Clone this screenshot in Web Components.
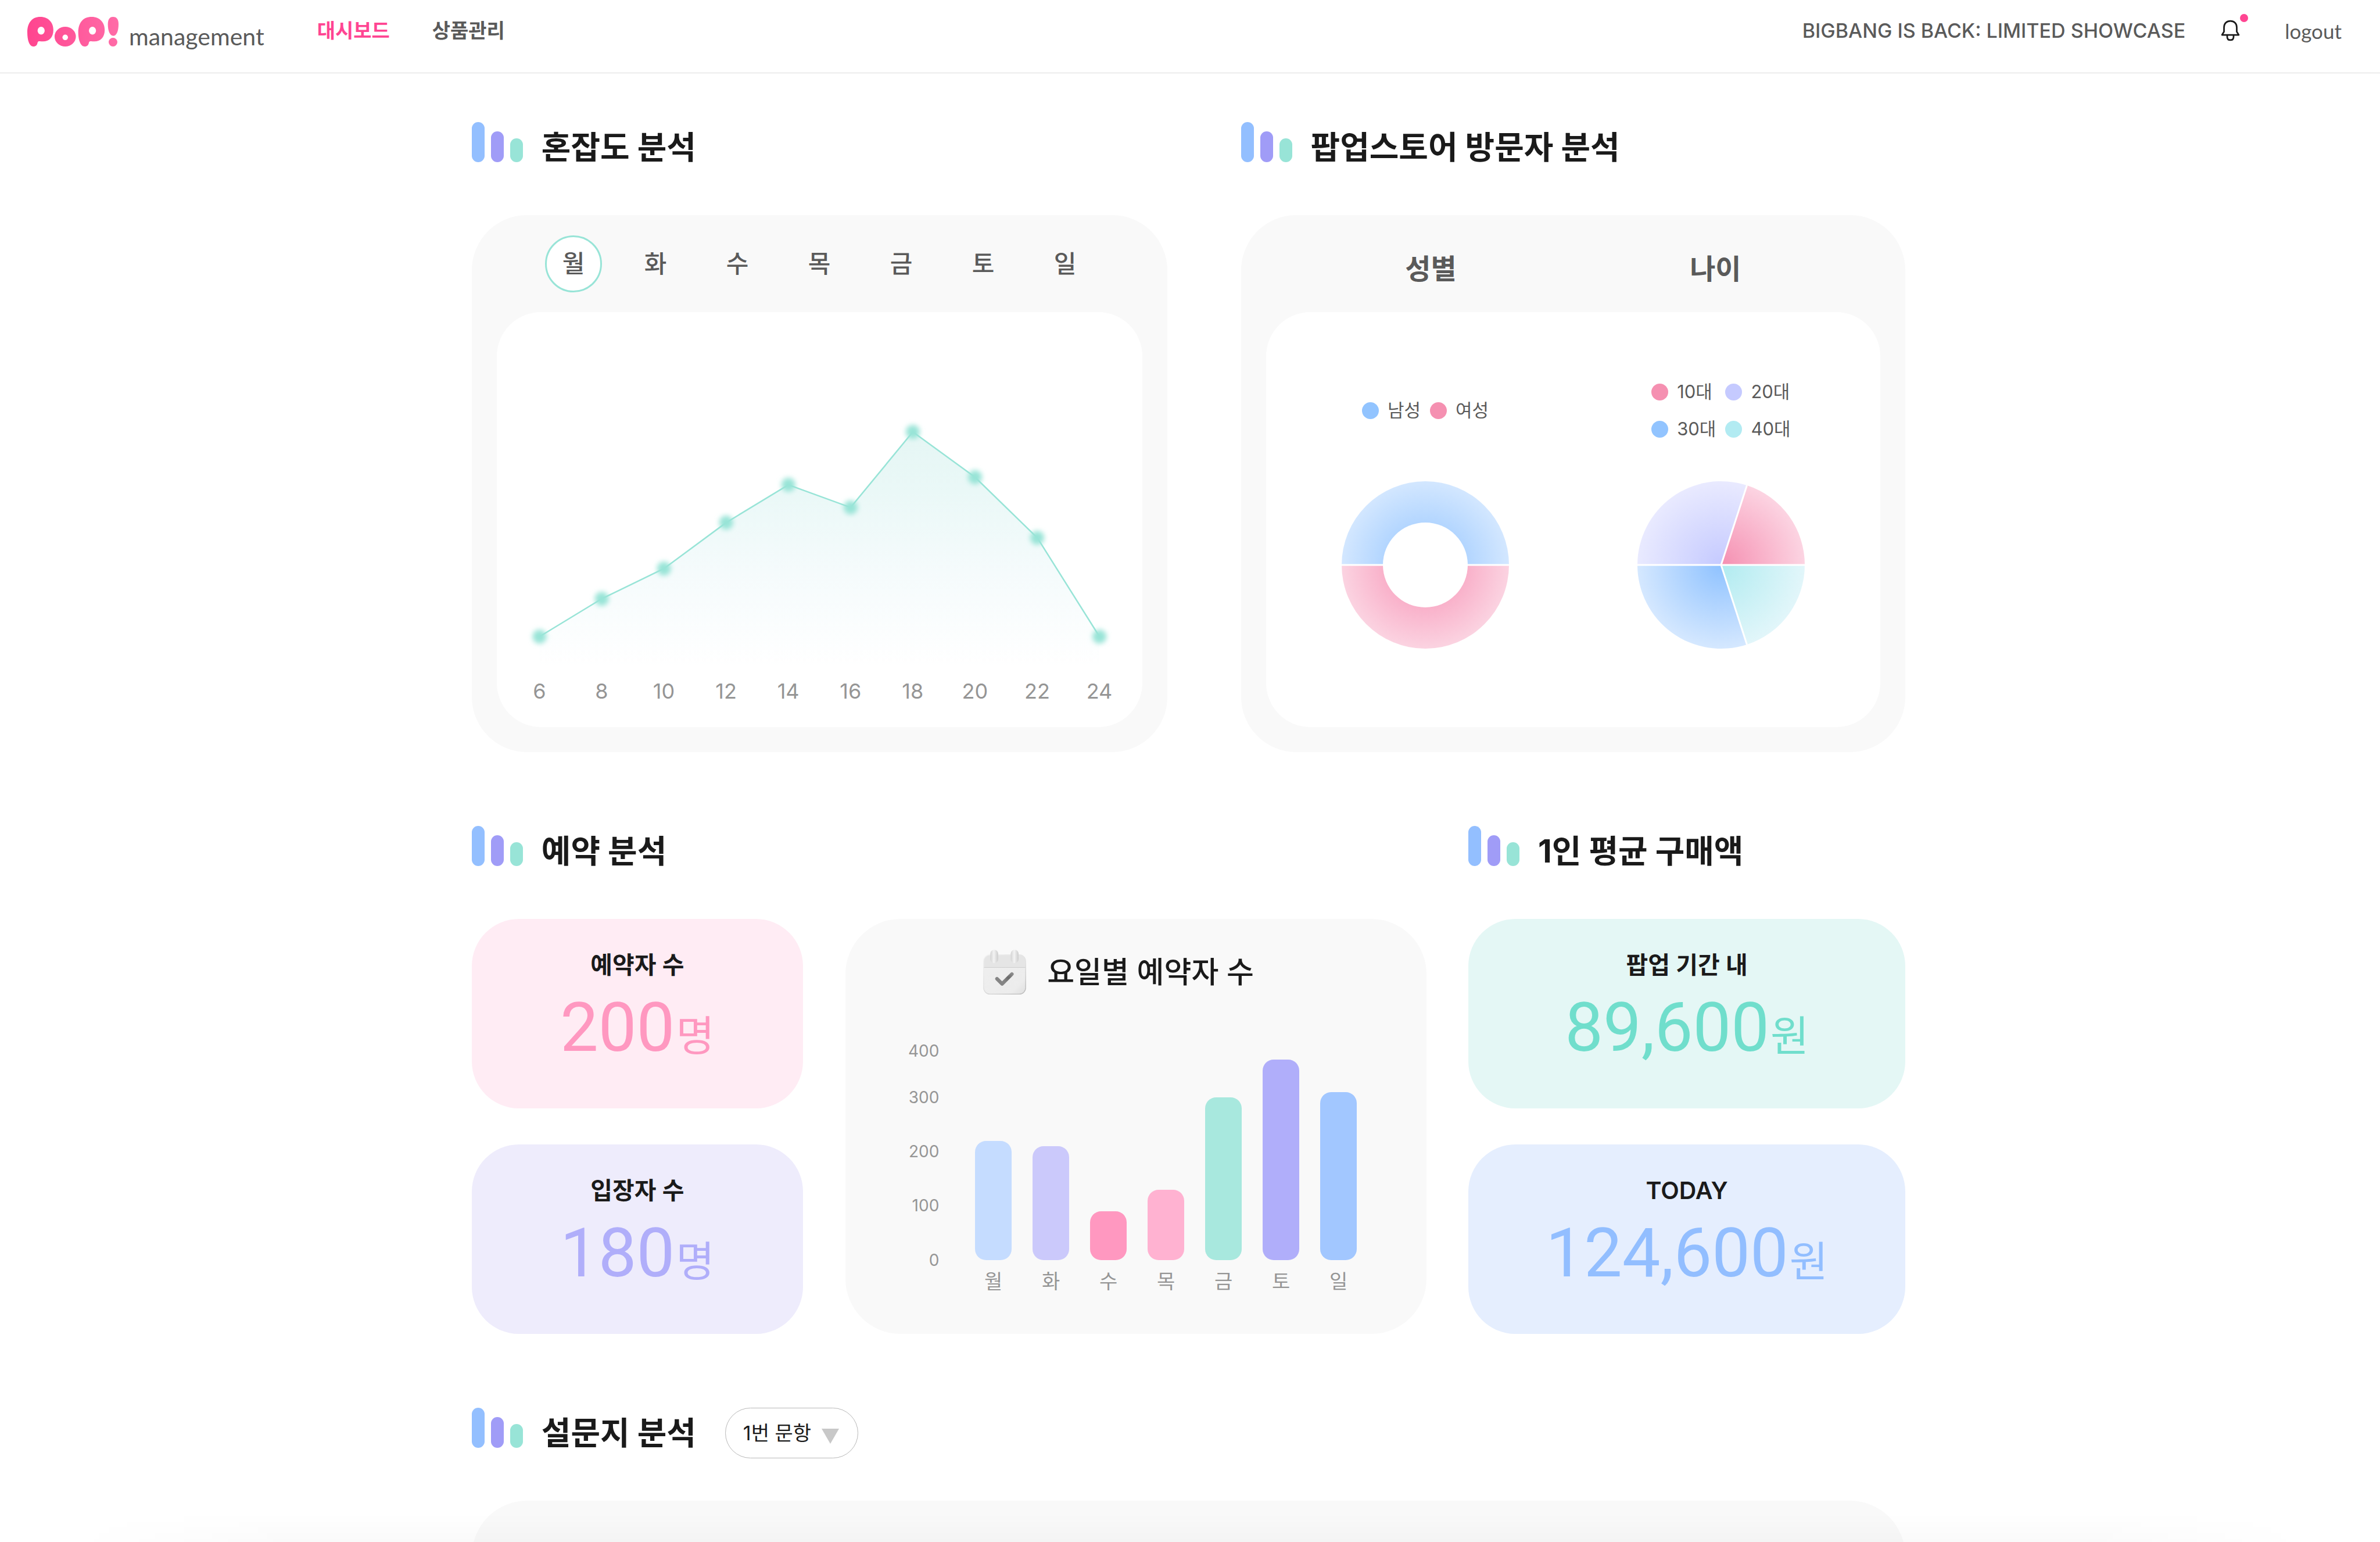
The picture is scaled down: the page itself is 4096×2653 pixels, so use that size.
<!DOCTYPE html>
<html lang="ko">
<head>
<meta charset="utf-8">
<title>PoP! management</title>
<style>
  body {
    margin: 0;
    background: #fff;
    color: #1a1a1a;
    font-family: Inter, "Noto Sans CJK KR", sans-serif;
  }
</style>
</head>
<body>
<pop-dashboard></pop-dashboard>
<script>
const base = `
  *, *::before, *::after { box-sizing: border-box; }
  button, select { font: inherit; color: inherit; background: none; border: 0; margin: 0; padding: 0; cursor: pointer; }
  a { color: inherit; text-decoration: none; }
  h1, h2, h3, p, ul, ol { margin: 0; padding: 0; font: inherit; list-style: none; }
  svg { display: block; }
`;
function component(name, css, render) {
  customElements.define(name, class extends HTMLElement {
    connectedCallback() {
      if (this.shadowRoot) return;
      const t = document.createElement('template');
      t.innerHTML = `<style>${base}${css}</style>${typeof render === 'function' ? render(this) : render}`;
      this.attachShadow({ mode: 'open' }).append(t.content.cloneNode(true));
    }
  });
}

component('pop-logo', `
  :host { display: flex; align-items: flex-start; gap: 18px; }
  svg { width: 157px; height: 51px; margin-top: 10px; }
  span { font: 41px/48px Lato, sans-serif; color: #5a5a5a; padding-top: 20px; }
`, `
  <svg viewBox="70 43 231 75" role="img" aria-label="PoP!">
    <defs><linearGradient id="g" gradientUnits="userSpaceOnUse" x1="70" y1="0" x2="301" y2="0">
      <stop offset="0" stop-color="#ff458f"/><stop offset="1" stop-color="#ff6ba7"/></linearGradient></defs>
    <g fill="url(#g)">
      <path d="M70 82C70 58 82 43 103 43C124 43 136 58 136 76C136 95 125 105 110 105C101 105 97 103 96 108C95 114 92 118 85 118C75 118 70 102 70 82Z"/>
      <ellipse cx="166" cy="93" rx="27" ry="25"/>
      <path d="M199 82C199 58 211 43 233 43C254 43 266 58 266 76C266 95 255 105 240 105C231 105 227 103 226 108C225 114 222 118 215 118C205 118 199 102 199 82Z"/>
      <path d="M287 43C297 43 301 50 301 62C301 78 296 91 288 91C279 91 274 78 274 62C274 50 278 43 287 43Z"/>
      <circle cx="287" cy="107" r="11"/>
    </g>
    <g fill="#fff"><ellipse cx="105" cy="78" rx="9" ry="10"/><ellipse cx="166" cy="95" rx="7" ry="7"/><ellipse cx="235" cy="78" rx="9" ry="10"/></g>
  </svg>
  <span>management</span>
`);

component('pop-header', `
  :host { display: flex; align-items: center; height: 126px; padding: 0 66px 20px 47px; border-bottom: 1px solid #ddd; color: #5a5a5a; }
  nav { display: flex; gap: 73px; margin-left: 91px; font-size: 34px; line-height: 48px; font-weight: 700; }
  [aria-current] { color: #ff4592; }
  .right { display: flex; align-items: center; margin-left: auto; }
  .store { font-size: 34px; line-height: 48px; font-weight: 500; }
  .bell { position: relative; margin: 0 77px 0 61px; color: #1a1a1a; }
  .bell svg { width: 33px; height: 37px; }
  .bell i { position: absolute; top: -10px; right: -14px; width: 14px; height: 14px; border-radius: 50%; background: #ff4592; }
  .logout { font: 35px/48px Lato, sans-serif; }
`, `
  <pop-logo></pop-logo>
  <nav><a href="#dashboard" aria-current="page">대시보드</a><a href="#products">상품관리</a></nav>
  <div class="right">
    <p class="store">BIGBANG IS BACK: LIMITED SHOWCASE</p>
    <button class="bell" aria-label="알림">
      <svg viewBox="0 0 48 54" fill="none" stroke="currentColor" stroke-width="4" stroke-linecap="round" stroke-linejoin="round">
        <path d="M8 30V19C8 9 15 3 24 3S40 9 40 19V30L45 38H3Z"/><path d="M16 39V43C16 48 19 51 24 51S32 48 32 43V39"/>
      </svg><i></i>
    </button>
    <button class="logout">logout</button>
  </div>
`);

component('section-title', `
  :host { display: flex; align-items: flex-start; height: 87px; margin-bottom: 73px; }
  .bars { display: flex; align-items: flex-end; gap: 11px; height: 69px; margin-right: 32px; }
  i { width: 22px; border-radius: 11px; }
  i:nth-child(1) { height: 69px; background: #93bfff; }
  i:nth-child(2) { height: 53px; background: #a09cf7; }
  i:nth-child(3) { height: 41px; background: #98e4d7; }
  h2 { font-size: 55px; line-height: 86px; font-weight: 700; white-space: nowrap; }
  ::slotted(question-select) { margin-left: 50px; }
`, `<div class="bars"><i></i><i></i><i></i></div><h2><slot></slot></h2><slot name="action"></slot>`);

component('question-select', `
  :host { display: block; position: relative; color: #1a1a1a; }
  select { appearance: none; width: 229px; height: 87px; padding: 0 0 0 30px; border: 1px solid #b8b8b8; border-radius: 44px; font-size: 34px; }
  svg { position: absolute; right: 33px; top: 36px; width: 30px; height: 26px; pointer-events: none; }
`, `
  <select aria-label="문항 선택"><option>1번 문항</option><option>2번 문항</option><option>3번 문항</option></select>
  <svg viewBox="0 0 30 26"><path d="M0 0H30L15 26Z" fill="#c8c8c8"/></svg>
`);

component('day-tabs', `
  :host { display: flex; justify-content: center; gap: 43px; color: #5a5a5a; }
  button { width: 98px; height: 98px; border-radius: 50%; border: 3px solid transparent; font-size: 42px; line-height: 48px; font-weight: 500; }
  [aria-pressed=true] { background: #fff; border-color: #98e4d7; }
`, [...'월화수목금토일'].map((d, i) => `<button aria-pressed="${i === 0}">${d}</button>`).join(''));

component('crowd-chart', `
  :host { display: block; padding: 180px 20px 0; }
  svg { width: 100%; height: auto; }
  ol { display: flex; color: #959595; font-size: 36px; line-height: 44px; }
  li { flex: 1; text-align: center; }
`, () => {
  const ys = [378, 313, 261, 182, 117, 156, 26, 104, 208, 378];
  const pts = ys.map((y, i) => [53.5 + 107 * i, y]);
  const line = pts.map(p => p.join(',')).join(' ');
  return `
  <svg viewBox="0 0 1070 450">
    <defs>
      <linearGradient id="a" gradientUnits="userSpaceOnUse" x1="0" y1="26" x2="0" y2="430"><stop stop-color="#e5f6f4"/><stop offset=".25" stop-color="#eaf8f7"/><stop offset=".6" stop-color="#f5fbfc"/><stop offset="1" stop-color="#fff"/></linearGradient>
      <filter id="b" x="-100%" y="-100%" width="300%" height="300%"><feGaussianBlur stdDeviation="4"/></filter>
    </defs>
    <polygon fill="url(#a)" points="53.5,440 ${line} 1016.5,440"/>
    <polyline fill="none" stroke="#98e4d7" stroke-width="2.5" points="${line}"/>
    ${pts.map(([x, y]) => `<circle cx="${x}" cy="${y}" r="12" fill="#98e4d7" filter="url(#b)"/>`).join('')}
  </svg>
  <ol>${ys.map((_, i) => `<li>${6 + i * 2}</li>`).join('')}</ol>`;
});

component('chart-legend', `
  :host { display: grid; grid-template-columns: auto auto; align-content: center; justify-content: center; gap: 20px 16px; height: 108px; color: #5a5a5a; }
  span { display: flex; align-items: center; gap: 15px; font-size: 31px; line-height: 44px; }
  i { width: 29px; height: 29px; border-radius: 50%; }
`, el => el.getAttribute('items').split(',').map(s => s.split(':'))
  .map(([t, c]) => `<span><i style="background:${c}"></i>${t}</span>`).join(''));

component('pie-chart', `
  :host { display: block; }
  svg { width: 288px; height: 288px; }
`, el => {
  const hole = +el.getAttribute('hole') || 0, R = 144;
  const pt = a => [R * Math.cos(a * Math.PI / 180), -R * Math.sin(a * Math.PI / 180)].map(n => n.toFixed(2)).join(' ');
  const slices = el.getAttribute('slices').split(',').map(s => s.split(':'));
  return `<svg viewBox="-144 -144 288 288">
    <defs>${slices.map(([, , c, d], i) => `<radialGradient id="s${i}" gradientUnits="userSpaceOnUse" cx="0" cy="0" r="144"><stop stop-color="${c}"/><stop offset="1" stop-color="${d}"/></radialGradient>`).join('')}</defs>
    ${slices.map(([a, b], i) => `<path fill="url(#s${i})" d="M0 0L${pt(+a)}A${R} ${R} 0 0 0 ${pt(+b)}Z"/>`).join('')}
    <path d="${slices.map(([a]) => `M0 0L${pt(+a)}`).join('')}" stroke="#fff" stroke-width="3"/>
    ${hole ? `<circle r="${hole}" fill="#fff"/>` : ''}
  </svg>`;
});

component('chart-panel', `
  :host { display: flex; flex-direction: column; height: 924px; padding: 0 43px 43px; border-radius: 95px; background: #f9f9f9; }
  header { height: 167px; padding-top: 35px; flex: none; }
  .body { flex: 1; border-radius: 76px; background: #fff; }
`, `<header><slot name="head"></slot></header><div class="body"><slot></slot></div>`);

component('visitor-heads', `
  :host { display: flex; padding: 0 39px; color: #5a5a5a; }
  h3 { flex: 1; text-align: center; font-size: 48px; line-height: 116px; font-weight: 700; }
`, `<h3>성별</h3><h3>나이</h3>`);

component('visitor-charts', `
  :host { display: flex; padding: 115px 20px 0; }
  div { flex: 1; display: flex; flex-direction: column; align-items: center; gap: 68px; }
`, `
  <div>
    <chart-legend items="남성:#92c4ff,여성:#f590b1"></chart-legend>
    <pie-chart hole="73" slices="0:180:#92c4ff:#d3e7ff,180:360:#f78fb3:#fbd3e1"></pie-chart>
  </div>
  <div>
    <chart-legend items="10대:#f590b1,20대:#c5caff,30대:#92c4ff,40대:#b2ebf2"></chart-legend>
    <pie-chart slices="0:72:#f58fb1:#fcd4e2,72:180:#c5caff:#e9eaff,180:288:#8fc2ff:#d5e8ff,288:360:#b0ebf0:#e2f6fa"></pie-chart>
  </div>
`);

component('stat-card', `
  :host { display: flex; flex-direction: column; align-items: center; height: 326px; padding-top: 51px; border-radius: 81px; }
  h3 { font-size: 41px; line-height: 56px; font-weight: 600; color: #1a1a1a; }
  p { display: flex; align-items: baseline; gap: 2px; font-family: Roboto, "Noto Sans CJK KR", sans-serif; font-size: 117px; line-height: 160px; white-space: nowrap; }
  small { font-size: 72px; line-height: 80px; }
  :host([tone=pink]) { background: #ffecf4; color: #ff98c0; }
  :host([tone=violet]) { background: #eeecfc; color: #b0aefa; }
  :host([tone=mint]) { background: #e4f7f5; color: #70decc; }
  :host([tone=blue]) { background: #e5eefe; color: #92beff; }
`, `<h3><slot name="label"></slot></h3><p><slot></slot><small><slot name="unit"></slot></small></p>`);

component('calendar-icon', `
  :host { display: block; }
  svg { width: 74px; height: 77px; }
`, `
  <svg viewBox="0 0 109 114">
    <defs>
      <linearGradient id="p" x1="0" y1="0" x2="1" y2="1"><stop stop-color="#efefef"/><stop offset=".8" stop-color="#ececec"/><stop offset="1" stop-color="#dedede"/></linearGradient>
      <linearGradient id="r" x1="0" y1="0" x2="1" y2="0"><stop stop-color="#d4d4d4"/><stop offset=".45" stop-color="#f3f3f3"/><stop offset="1" stop-color="#cdcdcd"/></linearGradient>
      <linearGradient id="k" x1="0" y1="1" x2="1" y2="0"><stop offset=".4" stop-color="#858585"/><stop offset=".7" stop-color="#6a6a6a"/><stop offset="1" stop-color="#8a8a8a"/></linearGradient>
      <linearGradient id="e" x1="0" y1="0" x2=".7" y2="1"><stop stop-color="#f2f2f2"/><stop offset=".6" stop-color="#e0e0e0"/><stop offset="1" stop-color="#bdbdbd"/></linearGradient>
    </defs>
    <rect x="1" y="13" width="107" height="100" rx="16" fill="url(#p)"/>
    <path d="M1 45V29A16 16 0 0 1 17 13H92A16 16 0 0 1 108 29V45Z" fill="#e5e5e5"/>
    <path d="M1 45H108" stroke="#cfcfcf" stroke-width="1.5"/>
    <rect x="1" y="13" width="107" height="100" rx="16" fill="none" stroke="url(#e)" stroke-width="2"/>
    <rect x="18" y="0" width="20" height="34" rx="10" fill="url(#r)"/>
    <rect x="70" y="0" width="20" height="34" rx="10" fill="url(#r)"/>
    <path d="M35 74L48 87L73 62" fill="none" stroke="url(#k)" stroke-width="9" stroke-linecap="round" stroke-linejoin="round"/>
  </svg>
`);

component('weekday-chart', `
  :host { display: flex; flex-direction: column; padding: 53px 120px 0 108px; border-radius: 95px; background: #f9f9f9; }
  header { display: flex; justify-content: center; align-items: center; gap: 36px; margin-bottom: 79px; padding-right: 48px; height: 77px; }
  h3 { font-size: 51px; line-height: 76px; font-weight: 500; white-space: nowrap; }
  .chart { display: flex; justify-content: space-between; color: #959595; }
  .axis { display: grid; grid-template-rows: 80px 93px 93px 94px 36px; font-size: 28px; line-height: 36px; text-align: right; }
  .plot { display: flex; align-items: flex-end; gap: 36px; padding-top: 18px; align-self: flex-start; height: 452px; }
  .plot li { width: 63px; text-align: center; font-size: 34px; line-height: 74px; }
  .plot i { display: block; border-radius: 19px; }
`, () => {
  const data = [['월', 205, '#c5dcff'], ['화', 196, '#cbc9fb'], ['수', 84, '#ff98c0'], ['목', 121, '#ffb2d1'], ['금', 280, '#a8e8de'], ['토', 345, '#b0aefa'], ['일', 289, '#a2c7ff']];
  return `
  <header><calendar-icon></calendar-icon><h3>요일별 예약자 수</h3></header>
  <div class="chart">
    <ul class="axis"><li>400</li><li>300</li><li>200</li><li>100</li><li>0</li></ul>
    <ul class="plot">${data.map(([d, h, c]) => `<li><i style="height:${h}px;background:${c}"></i>${d}</li>`).join('')}</ul>
  </div>`;
});

component('pop-dashboard', `
  :host { display: flex; flex-direction: column; height: 100vh; overflow: hidden; position: relative; }
  pop-header { flex: none; }
  main { padding: 84px 19.94% 0 19.82%; display: flex; flex-direction: column; gap: 127px; }
  .row { display: grid; }
  .top { grid-template-columns: 1196fr 1143fr; column-gap: 127px; }
  .mid { grid-template-columns: 1643fr 752fr; column-gap: 72px; }
  .booking { display: grid; grid-template-columns: 570fr 1000fr; column-gap: 73px; }
  .stack { display: flex; flex-direction: column; gap: 62px; }
  .survey { height: 700px; border-radius: 95px; background: #f9f9f9; }
  .fade { position: absolute; inset: auto 3% 0 3%; height: 50px; pointer-events: none;
    background: linear-gradient(rgba(0,0,0,0), rgba(0,0,0,.018));
    mask-image: linear-gradient(90deg, transparent, #000 10%, #000 90%, transparent); }
`, `
  <pop-header></pop-header>
  <main>
    <div class="row top">
      <section>
        <section-title>혼잡도 분석</section-title>
        <chart-panel><day-tabs slot="head"></day-tabs><crowd-chart></crowd-chart></chart-panel>
      </section>
      <section>
        <section-title>팝업스토어 방문자 분석</section-title>
        <chart-panel><visitor-heads slot="head"></visitor-heads><visitor-charts></visitor-charts></chart-panel>
      </section>
    </div>
    <div class="row mid">
      <section>
        <section-title>예약 분석</section-title>
        <div class="booking">
          <div class="stack">
            <stat-card tone="pink"><span slot="label">예약자 수</span>200<span slot="unit">명</span></stat-card>
            <stat-card tone="violet"><span slot="label">입장자 수</span>180<span slot="unit">명</span></stat-card>
          </div>
          <weekday-chart></weekday-chart>
        </div>
      </section>
      <section>
        <section-title>1인 평균 구매액</section-title>
        <div class="stack">
          <stat-card tone="mint"><span slot="label">팝업 기간 내</span>89,600<span slot="unit">원</span></stat-card>
          <stat-card tone="blue"><span slot="label">TODAY</span>124,600<span slot="unit">원</span></stat-card>
        </div>
      </section>
    </div>
    <section>
      <section-title>설문지 분석<question-select slot="action"></question-select></section-title>
      <div class="survey"></div>
    </section>
  </main>
  <div class="fade"></div>
`);
</script>
</body>
</html>
